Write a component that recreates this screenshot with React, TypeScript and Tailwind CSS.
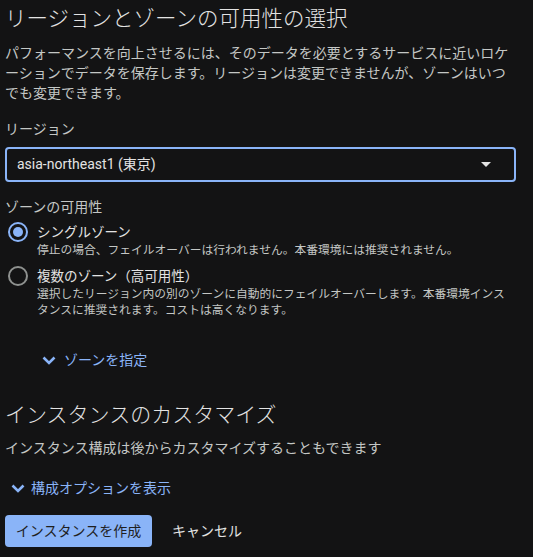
import { useState } from 'react';

const font = { fontFamily: 'Roboto, "Noto Sans CJK JP", sans-serif' };

function ExpandIcon() {
  return (
    <svg viewBox="0 0 14 9" className="h-[9px] w-[14px]" fill="none" stroke="currentColor" strokeWidth={2.6} aria-hidden>
      <path d="M1.5 1.5 7 7l5.5-5.5" />
    </svg>
  );
}

interface ZoneOption {
  id: string;
  label: string;
  desc: string;
}

const zoneOptions: ZoneOption[] = [
  {
    id: 'single',
    label: 'シングルゾーン',
    desc: '停止の場合、フェイルオーバーは行われません。本番環境には推奨されません。',
  },
  {
    id: 'multi',
    label: '複数のゾーン（高可用性）',
    desc: '選択したリージョン内の別のゾーンに自動的にフェイルオーバーします。本番環境インスタンスに推奨されます。コストは高くなります。',
  },
];

export default function App() {
  const [zone, setZone] = useState('single');

  return (
    <div className="min-h-screen bg-[#131314] pl-[5px] pr-[17px] pt-[5px] text-[#e3e3e3]" style={font}>
      <h1 className="text-[21.5px] leading-[28px] font-light">リージョンとゾーンの可用性の選択</h1>
      <p className="mt-[10px] text-[14px] leading-[20px] text-[#c4c7c5]">
        パフォーマンスを向上させるには、そのデータを必要とするサービスに近いロケーションでデータを保存します。リージョンは変更できませんが、ゾーンはいつでも変更できます。
      </p>

      <div className="mt-[16px] text-[14px] leading-[20px] text-[#c4c7c5]">リージョン</div>
      <div className="mt-[8px] flex h-[35px] w-[511px] items-center justify-between rounded-[4px] border-2 border-[#8ab4f8] pl-[10px] pr-[23px]">
        <span className="text-[14px] text-[#e3e3e3]">asia-northeast1 (東京)</span>
        <span className="h-0 w-0 border-x-[5px] border-t-[5px] border-x-transparent border-t-[#e3e3e3]" />
      </div>

      <div className="mt-[15px] text-[14px] leading-[20px] text-[#c4c7c5]">ゾーンの可用性</div>
      <div className="mt-[5px] flex flex-col gap-[8px]">
        {zoneOptions.map((o) => {
          const on = zone === o.id;
          return (
            <label key={o.id} className="flex cursor-pointer items-start gap-[9px] pl-[3px]" onClick={() => setZone(o.id)}>
              <span
                className={`flex h-[20px] w-[20px] shrink-0 items-center justify-center rounded-full border-2 ${
                  on ? 'border-[#8ab4f8]' : 'border-[#8e918f]'
                }`}
              >
                {on && <span className="h-[10px] w-[10px] rounded-full bg-[#8ab4f8]" />}
              </span>
              <span className="flex flex-col">
                <span className="text-[13.5px] leading-[20px] text-[#e3e3e3]">{o.label}</span>
                <span className="text-[11.75px] leading-[16px] text-[#c4c7c5]">{o.desc}</span>
              </span>
            </label>
          );
        })}
      </div>

      <button className="mt-[30px] ml-[37px] flex h-[24px] items-center gap-[8px] text-[#8ab4f8]">
        <ExpandIcon />
        <span className="text-[14px] leading-[20px]">ゾーンを指定</span>
      </button>

      <h2 className="mt-[29px] text-[21px] leading-[28px] font-light">インスタンスのカスタマイズ</h2>
      <p className="mt-[9px] text-[14px] leading-[20px] text-[#c4c7c5]">インスタンス構成は後からカスタマイズすることもできます</p>

      <button className="mt-[18px] ml-[6px] flex h-[24px] items-center gap-[6px] text-[#8ab4f8]">
        <ExpandIcon />
        <span className="text-[14px] leading-[20px]">構成オプションを表示</span>
      </button>

      <div className="mt-[15px] flex items-center gap-[8px]">
        <button className="h-[32px] w-[147px] rounded-[4px] bg-[#8ab4f8] text-[14px] font-normal text-[#1f1f1f]">
          インスタンスを作成
        </button>
        <button className="h-[32px] px-[12px] text-[14px] font-normal text-[#e3e3e3]">キャンセル</button>
      </div>
    </div>
  );
}
